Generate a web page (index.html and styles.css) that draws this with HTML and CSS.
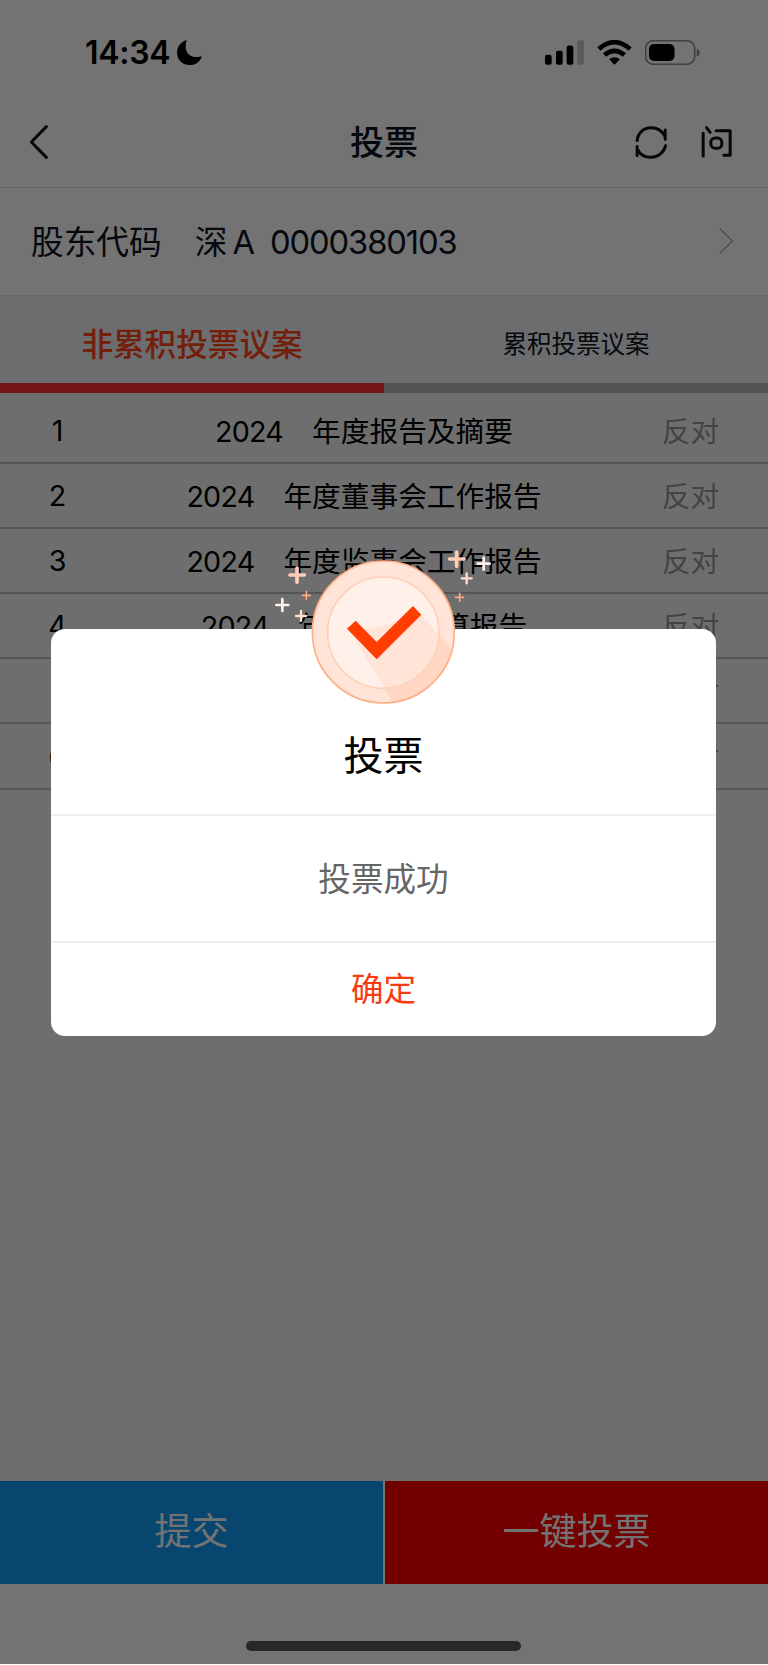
FILE: index.html
```html
<!DOCTYPE html>
<html lang="zh-CN">
<head>
  <meta charset="UTF-8" />
  <meta name="viewport" content="width=device-width, initial-scale=1" />
  <title>投票</title>
  <link rel="stylesheet" href="styles.css">
</head>
<body>
  <div class="page">

    <!-- STATUS BAR -->
    <div class="status-bar">
      <span class="time">14:34</span>
      <svg class="moon" viewBox="0 0 75 75"><path d="M29 0C12 6 0 20 0 38c0 21 17 37 38 37 18 0 33-11 37-28-4 3-11 4-17 4C39 51 26 38 26 20c0-8 1-14 3-20z"/></svg>
      <svg class="signal" viewBox="0 0 117 74">
        <rect x="0" y="44" width="20" height="30" rx="6"/>
        <rect x="33" y="32" width="20" height="42" rx="6"/>
        <rect x="65" y="16" width="20" height="58" rx="6"/>
        <rect x="97" y="0" width="20" height="74" rx="6" opacity="0.22"/>
      </svg>
      <svg class="wifi" viewBox="0 0 104 75">
        <path d="M5 27Q52-14 99 27" fill="none" stroke="#000" stroke-width="14"/>
        <path d="M22 45Q52 20 82 45" fill="none" stroke="#000" stroke-width="14"/>
        <path d="M36 58Q52 45 68 58L54 73Q52 75 50 73z"/>
      </svg>
      <svg class="battery" viewBox="0 0 166 75">
        <rect x="2" y="2" width="148" height="71" rx="23" fill="none" stroke="#000" stroke-width="5" opacity="0.45"/>
        <rect x="12" y="12" width="77" height="51" rx="15"/>
        <path d="M156 26q9 3 9 12t-9 12z" opacity="0.45"/>
      </svg>
    </div>

    <!-- TITLE BAR -->
    <div class="nav">
      <svg class="back" viewBox="0 0 54 102"><path d="M49 5L4 51l45 46"/></svg>
      <h1>投票</h1>
      <svg class="refresh" viewBox="0 0 96 100">
        <path d="M6 44C8 22 25 5 48 5c18 0 34 10 42 26M91 12v29"/>
        <path d="M92 60C88 79 70 95 48 95 30 95 14 86 7 70M6 62v28"/>
      </svg>
      <svg class="ask" viewBox="0 0 92 96">
        <path d="M6 22v68M16 5l11 14M45 14h42v74H68"/>
        <rect x="29" y="36" width="33" height="31" rx="13"/>
      </svg>
    </div>

    <!-- SHAREHOLDER CODE -->
    <div class="account">
      <span class="account-label">股东代码</span>
      <span class="market">深</span>
      <span class="market-type">A</span>
      <span class="code">0000380103</span>
      <svg class="arrow" viewBox="0 0 44 78"><path d="M2 2l38 37L2 76"/></svg>
    </div>

    <!-- TABS -->
    <div class="tabs">
      <div class="tab active">非累积投票议案</div>
      <div class="tab">累积投票议案</div>
    </div>

    <!-- PROPOSALS -->
    <div class="list">
      <div class="row"><span class="no">1</span><span class="name"><span class="year">2024</span>年度报告及摘要</span><span class="vote">反对</span></div>
      <div class="row"><span class="no">2</span><span class="name"><span class="year">2024</span>年度董事会工作报告</span><span class="vote">反对</span></div>
      <div class="row"><span class="no">3</span><span class="name"><span class="year">2024</span>年度监事会工作报告</span><span class="vote">反对</span></div>
      <div class="row"><span class="no">4</span><span class="name"><span class="year">2024</span>年度财务决算报告</span><span class="vote">反对</span></div>
      <div class="row"><span class="no">5</span><span class="name"></span><span class="vote">反对</span></div>
      <div class="row"><span class="no">6</span><span class="name"></span><span class="vote">反对</span></div>
    </div>

    <!-- BOTTOM BUTTONS -->
    <div class="actions">
      <button class="btn submit">提交</button>
      <button class="btn quick">一键投票</button>
    </div>
    <div class="home-area"><div class="home-indicator"></div></div>

    <div class="mask"></div>

    <!-- RESULT DIALOG -->
    <div class="dialog">
      <svg class="badge" viewBox="0 0 750 540">
        <defs>
          <clipPath id="coin"><circle cx="370" cy="291" r="213"/></clipPath>
          <clipPath id="face"><circle cx="370" cy="293" r="167"/></clipPath>
        </defs>
        <circle cx="370" cy="291" r="213" fill="#ffe4d7"/>
        <path d="M275 296L398 502 600 540 620 397 484 239z" fill="#ffd7c3" clip-path="url(#coin)"/>
        <circle cx="370" cy="293" r="167" fill="#fff1e9"/>
        <path d="M275 296L398 502 600 540 620 397 484 239z" fill="#ffe4d7" clip-path="url(#face)"/>
        <circle cx="370" cy="293" r="167" fill="none" stroke="#ffd0b8" stroke-width="5"/>
        <circle cx="370" cy="291" r="213" fill="none" stroke="#ffae84" stroke-width="5"/>
        <path d="M261 281l26-24 63 64 109-108 25 26-134 134z" fill="#ff3d00"/>
        <g fill="none" stroke-linecap="round">
          <path d="M111 99v43M90 120h43M590 51v43M569 72h43" stroke="#ffcdb5" stroke-width="11"/>
          <path d="M67 192v36M49 210h36M671 68v36M653 86h36" stroke="#fff2ea" stroke-width="8"/>
          <path d="M123 228v30M108 243h30M620 115v30M605 130h30" stroke="#ffded0" stroke-width="7"/>
          <path d="M139 169v24M127 181h24M599 175v24M587 187h24" stroke="#f9a880" stroke-width="5"/>
        </g>
      </svg>
      <div class="dialog-title">投票</div>
      <div class="dialog-msg">投票成功</div>
      <div class="dialog-ok">确定</div>
    </div>

  </div>
</body>
</html>
```
FILE: styles.css
```css
* {
  box-sizing: border-box;
}
body {
  margin: 0;
  font-family: Inter, "Noto Sans CJK SC", sans-serif;
  color: #000;
}
h1 {
  margin: 0;
}
svg {
  display: block;
  flex-shrink: 0;
}
.page {
  position: relative;
  width: 768px;
  height: 1665px;
  display: flex;
  flex-direction: column;
  background: #f4f4f4;
  overflow: hidden;
}

/* Status bar */
.status-bar {
  height: 97px;
  padding: 7px 68px 0 85px;
  display: flex;
  align-items: center;
  background: #fff;
}
.time {
  width: 92px;
  padding-top: 1px;
  font-size: 32px;
  font-weight: 600;
  line-height: 40px;
  letter-spacing: -0.3px;
}
.moon {
  width: 25px;
  height: 25px;
}
.signal {
  width: 39px;
  height: 25px;
  margin-left: auto;
}
.wifi {
  width: 35px;
  height: 25px;
  margin-left: 13px;
}
.battery {
  width: 55px;
  height: 25px;
  margin-left: 13px;
}

/* Title bar */
.nav {
  height: 91px;
  padding: 0 36px 0 30px;
  display: grid;
  grid-template-columns: 103px 1fr 32px 31px;
  column-gap: 34px;
  align-items: center;
  background: #fff;
  border-bottom: 1px solid #e4e4e8;
}
.nav svg {
  fill: none;
  stroke: #0f1117;
  stroke-width: 9;
  stroke-linecap: round;
  stroke-linejoin: round;
}
.nav h1 {
  padding-top: 2px;
  text-align: center;
  font-size: 34px;
  font-weight: 500;
  line-height: 44px;
  color: #0c1222;
}
.back {
  width: 18px;
  height: 34px;
}
.refresh {
  width: 32px;
  height: 33px;
}
.ask {
  width: 31px;
  height: 32px;
}

/* Shareholder code */
.account {
  height: 108px;
  padding: 0 34px 0 31px;
  display: flex;
  align-items: center;
  font-size: 32.7px;
  color: #0c1222;
  background: #fff;
  border-bottom: 1px solid #e4e4ee;
}
.account-label,
.market {
  padding-bottom: 4px;
}
.market {
  margin-left: 33px;
}
.market-type {
  margin-left: 5px;
}
.code {
  margin-left: 15px;
  letter-spacing: -1.1px;
}
.arrow {
  width: 15px;
  height: 26px;
  margin-left: auto;
  margin-bottom: 2px;
  fill: none;
  stroke: #a8a8b2;
  stroke-width: 4;
}

/* Tabs */
.tabs {
  height: 97px;
  display: flex;
  background: #f0f2f6;
}
.tab {
  flex: 1;
  padding-top: 5px;
  display: flex;
  align-items: center;
  justify-content: center;
  font-size: 24.5px;
  color: #0c1222;
  border-bottom: 10px solid #b8b8b8;
}
.tab.active {
  font-size: 31.6px;
  font-weight: 500;
  color: #ff4518;
  border-bottom-color: #ff2f2f;
}

/* Proposals */
.list {
  padding-top: 6px;
}
.row {
  height: 65.1px;
  padding-bottom: 3px;
  display: grid;
  grid-template-columns: 115px 1fr 155px;
  align-items: center;
  text-align: center;
  font-size: 28.7px;
  border-bottom: 2px solid #bcbcbc;
}
.no {
  padding-top: 3px;
}
.year {
  margin-right: 29px;
  letter-spacing: -0.8px;
}
.vote {
  color: #959595;
}

/* Bottom buttons */
.actions {
  margin-top: auto;
  height: 103px;
  display: flex;
  gap: 2px;
  background: #fff;
}
.btn {
  flex: 1;
  padding: 0 0 7px;
  border: none;
  font-family: inherit;
  font-size: 37px;
  color: #fff;
}
.submit {
  background: #129cf7;
}
.quick {
  background: #ff0000;
}
.home-area {
  height: 81px;
  padding-top: 57px;
  background: #fff;
}
.home-indicator {
  width: 275px;
  height: 10px;
  margin: 0 0 0 246px;
  border-radius: 5px;
  background: #5a5a5a;
}

/* Result dialog */
.mask {
  position: absolute;
  inset: 0 0 1px;
  background: rgba(0, 0, 0, 0.55);
}
.dialog {
  position: absolute;
  top: 629px;
  left: 51px;
  width: 665px;
  height: 407px;
  display: flex;
  flex-direction: column;
  text-align: center;
  background: #fff;
  border-radius: 14px;
}
.badge {
  position: absolute;
  top: -94px;
  left: 209px;
  width: 250px;
  height: 180px;
}
.dialog-title {
  height: 187px;
  padding-top: 98px;
  font-size: 40px;
  line-height: 58px;
  border-bottom: 2px solid #efefef;
}
.dialog-msg {
  height: 127px;
  font-size: 32.6px;
  line-height: 126px;
  color: #666;
  border-bottom: 2px solid #efefef;
}
.dialog-ok {
  flex: 1;
  font-size: 32.6px;
  line-height: 93px;
  color: #f83c12;
}
```
